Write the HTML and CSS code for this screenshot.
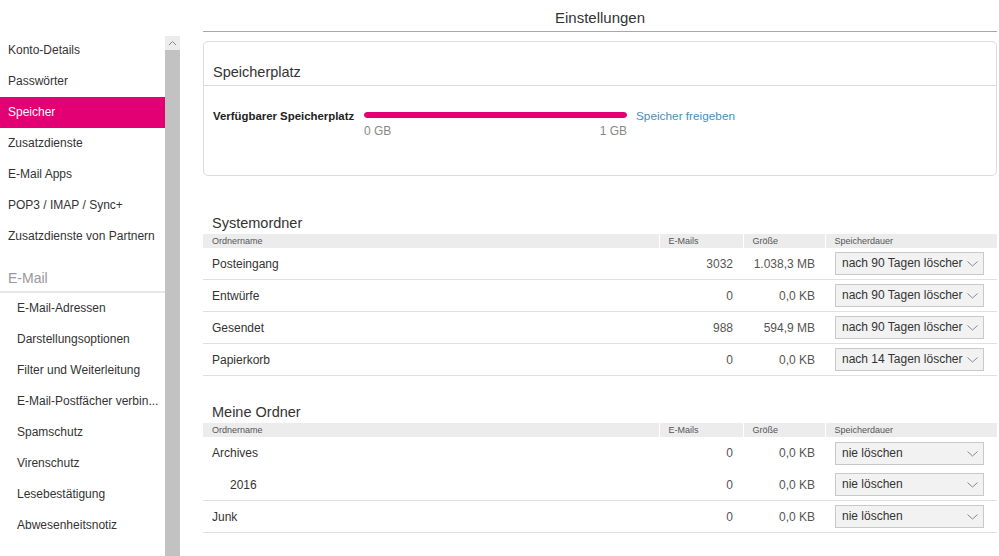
FILE: index.html
```html
<!DOCTYPE html>
<html lang="de">
<head>
    <meta charset="UTF-8">
    <meta name="viewport" content="width=device-width, initial-scale=1.0">
    <title>Einstellungen</title>
    <link rel="stylesheet" href="styles.css">
</head>
<body>
    <div class="page">
        <div class="sidebar">
            <ul class="menu">
                <li>Konto-Details</li>
                <li>Passwörter</li>
                <li class="active">Speicher</li>
                <li>Zusatzdienste</li>
                <li>E-Mail Apps</li>
                <li>POP3 / IMAP / Sync+</li>
                <li>Zusatzdienste von Partnern</li>
                <li class="group">E-Mail</li>
                <li class="sub">E-Mail-Adressen</li>
                <li class="sub">Darstellungsoptionen</li>
                <li class="sub">Filter und Weiterleitung</li>
                <li class="sub">E-Mail-Postfächer verbin...</li>
                <li class="sub">Spamschutz</li>
                <li class="sub">Virenschutz</li>
                <li class="sub">Lesebestätigung</li>
                <li class="sub">Abwesenheitsnotiz</li>
            </ul>
            <div class="scrollbar">
                <div class="scroll-up">
                    <svg width="9" height="6" viewBox="0 0 9 6"><path d="M1 5 L4.5 1.5 L8 5" fill="none" stroke="#888" stroke-width="1"/></svg>
                </div>
                <div class="scroll-thumb"></div>
            </div>
        </div>

        <div class="main">
            <div class="title">Einstellungen</div>

            <div class="card">
                <div class="card-head">Speicherplatz</div>
                <div class="card-body">
                    <div class="storage-label">Verfügbarer Speicherplatz</div>
                    <div class="storage-meter">
                        <div class="bar"><div class="bar-fill" style="width: 100%"></div></div>
                        <div class="bar-scale"><span>0 GB</span><span>1 GB</span></div>
                    </div>
                    <a class="free-link" href="#">Speicher freigeben</a>
                </div>
            </div>

            <h2 class="section-title first">Systemordner</h2>
            <table class="folders">
                <colgroup>
                    <col class="c-name"><col class="c-mails"><col class="c-size"><col class="c-keep">
                </colgroup>
                <thead>
                    <tr><th>Ordnername</th><th>E-Mails</th><th>Größe</th><th>Speicherdauer</th></tr>
                </thead>
                <tbody>
                    <tr><td>Posteingang</td><td class="num">3032</td><td class="num">1.038,3 MB</td><td><div class="select">nach 90 Tagen löscher<svg class="chev" width="11" height="6" viewBox="0 0 11 6"><path d="M0.5 0.5 L5.5 5 L10.5 0.5" fill="none" stroke="#888"/></svg></div></td></tr>
                    <tr><td>Entwürfe</td><td class="num">0</td><td class="num">0,0 KB</td><td><div class="select">nach 90 Tagen löscher<svg class="chev" width="11" height="6" viewBox="0 0 11 6"><path d="M0.5 0.5 L5.5 5 L10.5 0.5" fill="none" stroke="#888"/></svg></div></td></tr>
                    <tr><td>Gesendet</td><td class="num">988</td><td class="num">594,9 MB</td><td><div class="select">nach 90 Tagen löscher<svg class="chev" width="11" height="6" viewBox="0 0 11 6"><path d="M0.5 0.5 L5.5 5 L10.5 0.5" fill="none" stroke="#888"/></svg></div></td></tr>
                    <tr><td>Papierkorb</td><td class="num">0</td><td class="num">0,0 KB</td><td><div class="select">nach 14 Tagen löscher<svg class="chev" width="11" height="6" viewBox="0 0 11 6"><path d="M0.5 0.5 L5.5 5 L10.5 0.5" fill="none" stroke="#888"/></svg></div></td></tr>
                </tbody>
            </table>

            <h2 class="section-title">Meine Ordner</h2>
            <table class="folders">
                <colgroup>
                    <col class="c-name"><col class="c-mails"><col class="c-size"><col class="c-keep">
                </colgroup>
                <thead>
                    <tr><th>Ordnername</th><th>E-Mails</th><th>Größe</th><th>Speicherdauer</th></tr>
                </thead>
                <tbody>
                    <tr class="parent"><td>Archives</td><td class="num">0</td><td class="num">0,0 KB</td><td><div class="select">nie löschen<svg class="chev" width="11" height="6" viewBox="0 0 11 6"><path d="M0.5 0.5 L5.5 5 L10.5 0.5" fill="none" stroke="#888"/></svg></div></td></tr>
                    <tr><td class="child">2016</td><td class="num">0</td><td class="num">0,0 KB</td><td><div class="select">nie löschen<svg class="chev" width="11" height="6" viewBox="0 0 11 6"><path d="M0.5 0.5 L5.5 5 L10.5 0.5" fill="none" stroke="#888"/></svg></div></td></tr>
                    <tr><td>Junk</td><td class="num">0</td><td class="num">0,0 KB</td><td><div class="select">nie löschen<svg class="chev" width="11" height="6" viewBox="0 0 11 6"><path d="M0.5 0.5 L5.5 5 L10.5 0.5" fill="none" stroke="#888"/></svg></div></td></tr>
                </tbody>
            </table>
        </div>
    </div>
</body>
</html>
```

FILE: styles.css
```css
body {
    margin: 0;
    font-family: 'Liberation Sans', Arial, sans-serif;
    font-size: 12px;
    color: #333;
    background: #fff;
    overflow: hidden;
}

.page {
    display: flex;
    height: 556px;
}

/* Seitenleiste */
.sidebar {
    display: flex;
    width: 180px;
    flex-shrink: 0;
}

.menu {
    list-style: none;
    margin: 0;
    padding: 35px 0 0 0;
    width: 165px;
}

.menu li {
    height: 31px;
    line-height: 31px;
    padding-left: 8px;
    white-space: nowrap;
    color: #333;
}

.menu li.active {
    background: #e20074;
    color: #fff;
}

.menu li.group {
    height: auto;
    line-height: 18px;
    padding-top: 17px;
    padding-bottom: 4px;
    font-size: 14px;
    color: #999;
    border-bottom: 2px solid #e6e6e6;
}

.menu li.sub {
    padding-left: 17px;
}

.scrollbar {
    width: 15px;
    display: flex;
    flex-direction: column;
    padding-top: 36px;
}

.scroll-up {
    height: 14px;
    background: #ececec;
    display: flex;
    justify-content: center;
    align-items: center;
}

.scroll-thumb {
    flex: 1;
    background: #c2c2c2;
}

/* Hauptbereich */
.main {
    margin-left: 23px;
    width: 794px;
}

.title {
    padding-top: 8px;
    padding-bottom: 3px;
    line-height: 20px;
    font-size: 15px;
    text-align: center;
    color: #333;
    border-bottom: 1px solid #a8a8a8;
}

.card {
    margin-top: 9px;
    border: 1px solid #dcdcdc;
    border-radius: 5px;
    height: 133px;
}

.card-head {
    padding: 21px 0 4px 9px;
    line-height: 18px;
    font-size: 14.5px;
    color: #333;
    border-bottom: 1px solid #dcdcdc;
}

.card-body {
    display: flex;
    padding: 22px 0 0 9px;
}

.storage-label {
    width: 151px;
    line-height: 16px;
    font-size: 11.4px;
    font-weight: bold;
    color: #222;
}

.storage-meter {
    width: 263px;
    padding-top: 4px;
}

.bar {
    height: 6px;
    background: #ddd;
    border-radius: 3px;
    overflow: hidden;
}

.bar-fill {
    height: 100%;
    background: #e20074;
    border-radius: 3px;
}

.bar-scale {
    display: flex;
    justify-content: space-between;
    margin-top: 6px;
    line-height: 14px;
    color: #888;
}

.free-link {
    margin-left: 9px;
    line-height: 16px;
    font-size: 11.8px;
    color: #4a8db8;
    text-decoration: none;
}

.section-title {
    margin: 26px 0 0 0;
    padding-left: 9px;
    line-height: 20px;
    font-size: 14.5px;
    font-weight: normal;
    color: #333;
}

.section-title.first {
    margin-top: 37px;
}

.folders {
    width: 100%;
    border-collapse: collapse;
    table-layout: fixed;
    margin-top: 1px;
}

.c-name { width: 456px; }
.c-mails { width: 84px; }
.c-size { width: 82px; }
.c-keep { width: 172px; }

.folders th {
    height: 14px;
    padding: 0 0 0 9px;
    background: #ececec;
    font-size: 9px;
    font-weight: normal;
    color: #555;
    text-align: left;
    border-left: 1px solid #fff;
    line-height: 14px;
}

.folders th:first-child {
    border-left: none;
}

.folders td {
    height: 31px;
    padding: 0 0 0 9px;
    border-bottom: 1px solid #e0e0e0;
    font-size: 12px;
    color: #333;
}

.folders tr.parent td {
    border-bottom: none;
    height: 32px;
}

.folders td.num {
    text-align: right;
    padding: 0 10px 0 0;
    color: #555;
}

.folders td.child {
    padding-left: 27px;
}

.select {
    position: relative;
    box-sizing: border-box;
    width: 149px;
    height: 23px;
    margin-left: 1px;
    padding-left: 6px;
    line-height: 21px;
    background: #f2f2f2;
    border: 1px solid #c9c9c9;
    font-size: 12px;
    color: #333;
    white-space: nowrap;
    overflow: hidden;
}

.chev {
    position: absolute;
    right: 5px;
    top: 8px;
}
```
